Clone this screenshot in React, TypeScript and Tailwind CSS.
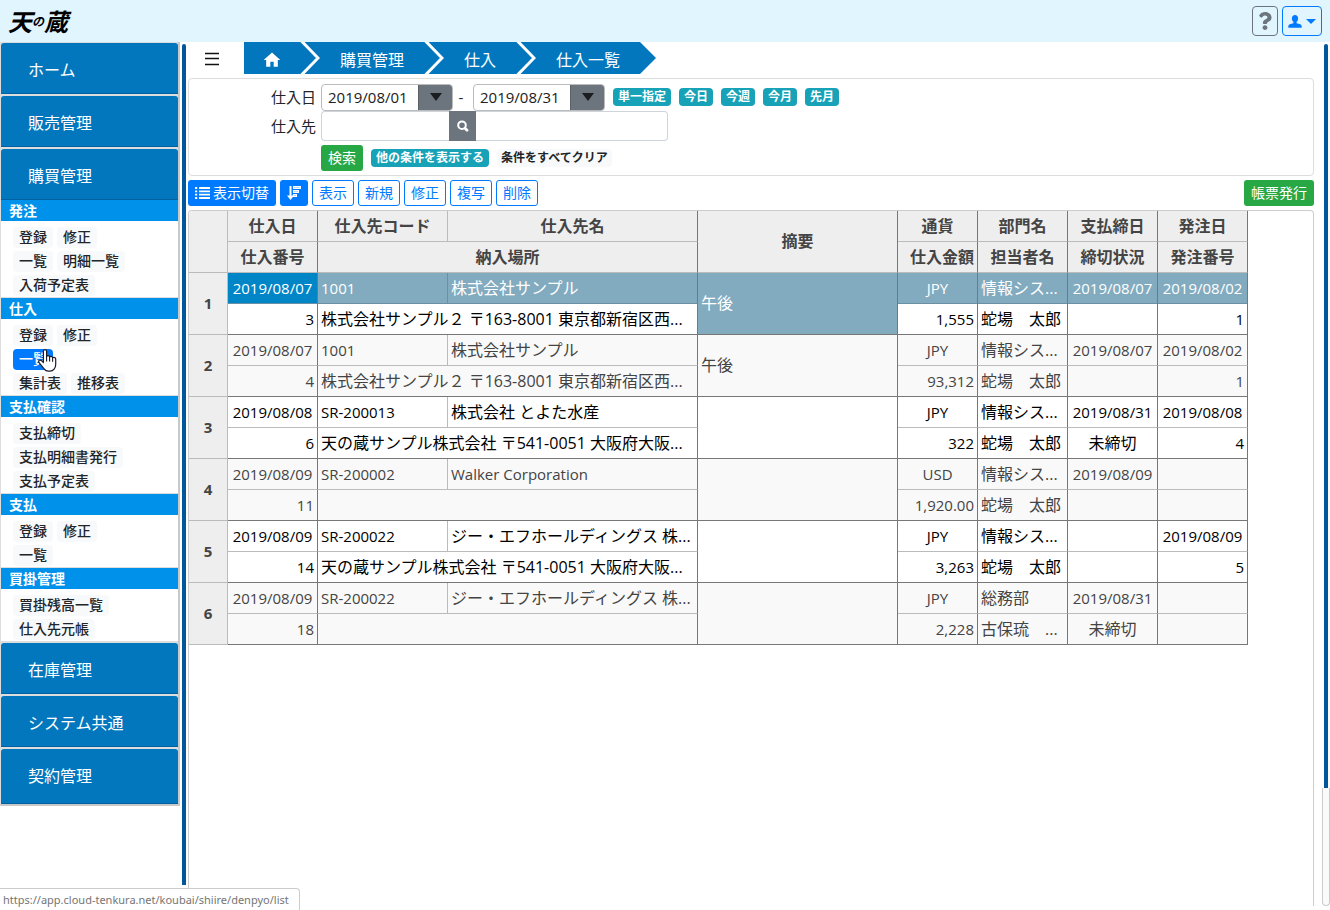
import { ReactNode, useState } from 'react';
import { FaQuestion } from 'react-icons/fa';
import { MdHome } from 'react-icons/md';
import clsx from 'clsx';

interface MenuSection {
  title: string;
  rows: string[][];
}

interface Denpyo {
  date: string;
  no: string;
  code: string;
  name: string;
  place: string;
  note: string;
  currency: string;
  amount: string;
  dept: string;
  staff: string;
  closeDate: string;
  closeState: string;
  orderDate: string;
  orderNo: string;
}

const sections: MenuSection[] = [
  { title: '発注', rows: [['登録', '修正'], ['一覧', '明細一覧'], ['入荷予定表']] },
  { title: '仕入', rows: [['登録', '修正'], ['一覧'], ['集計表', '推移表']] },
  { title: '支払確認', rows: [['支払締切'], ['支払明細書発行'], ['支払予定表']] },
  { title: '支払', rows: [['登録', '修正'], ['一覧']] },
  { title: '買掛管理', rows: [['買掛残高一覧'], ['仕入先元帳']] },
];

const records: Denpyo[] = [
  { date: '2019/08/07', no: '3', code: '1001', name: '株式会社サンプル', place: '株式会社サンプル２ 〒163-8001 東京都新宿区西...', note: '午後', currency: 'JPY', amount: '1,555', dept: '情報シス...', staff: '蛇場　太郎', closeDate: '2019/08/07', closeState: '', orderDate: '2019/08/02', orderNo: '1' },
  { date: '2019/08/07', no: '4', code: '1001', name: '株式会社サンプル', place: '株式会社サンプル２ 〒163-8001 東京都新宿区西...', note: '午後', currency: 'JPY', amount: '93,312', dept: '情報シス...', staff: '蛇場　太郎', closeDate: '2019/08/07', closeState: '', orderDate: '2019/08/02', orderNo: '1' },
  { date: '2019/08/08', no: '6', code: 'SR-200013', name: '株式会社 とよた水産', place: '天の蔵サンプル株式会社 〒541-0051 大阪府大阪...', note: '', currency: 'JPY', amount: '322', dept: '情報シス...', staff: '蛇場　太郎', closeDate: '2019/08/31', closeState: '未締切', orderDate: '2019/08/08', orderNo: '4' },
  { date: '2019/08/09', no: '11', code: 'SR-200002', name: 'Walker Corporation', place: '', note: '', currency: 'USD', amount: '1,920.00', dept: '情報シス...', staff: '蛇場　太郎', closeDate: '2019/08/09', closeState: '', orderDate: '', orderNo: '' },
  { date: '2019/08/09', no: '14', code: 'SR-200022', name: 'ジー・エフホールディングス 株...', place: '天の蔵サンプル株式会社 〒541-0051 大阪府大阪...', note: '', currency: 'JPY', amount: '3,263', dept: '情報シス...', staff: '蛇場　太郎', closeDate: '', closeState: '', orderDate: '2019/08/09', orderNo: '5' },
  { date: '2019/08/09', no: '18', code: 'SR-200022', name: 'ジー・エフホールディングス 株...', place: '', note: '', currency: 'JPY', amount: '2,228', dept: '総務部', staff: '古保琉　...', closeDate: '2019/08/31', closeState: '未締切', orderDate: '', orderNo: '' },
];

function MenuItem({ label, last = false }: { label: string; last?: boolean }) {
  return (
    <a
      href="#"
      className={clsx(
        'flex items-center rounded-t-[3px] border-b border-[#0062a3] bg-[#0277bd] px-[27px] text-base text-white',
        last ? 'h-[55px]' : 'h-[51px] pt-[3px]'
      )}
    >
      {label}
    </a>
  );
}

function HandCursor() {
  return (
    <svg className="absolute top-0 left-[25px] z-10 h-6 w-[19px]" viewBox="0 0 19 24" aria-hidden="true">
      <path
        d="M5.400 2.200c0-1.100.700-1.600 1.600-1.600s1.600.500 1.600 1.600v5.400c.300-.600.800-.900 1.400-.900.900 0 1.500.500 1.600 1.300.300-.400.800-.600 1.400-.600.900 0 1.500.500 1.600 1.300.300-.300.700-.400 1.200-.400 1.200 0 1.900.600 1.900 1.900v5.200c0 2.200-.700 3.600-1.600 4.800-1 1.300-2.400 2-4.200 2h-1.400c-2 0-3.400-.800-4.400-2.300L1.300 13.900c-.8-1-.8-1.900-.1-2.500.7-.6 1.600-.4 2.400.3l1.800 1.800z"
        fill="#fff"
        stroke="#1b1b2b"
        strokeWidth="1.2"
        strokeLinejoin="round"
      />
      <path d="M8.600 7.600v5M11.600 8v4.600M14.600 8.700v4" stroke="#1b1b2b" strokeWidth="1.1" fill="none" />
    </svg>
  );
}

function Sidebar() {
  return (
    <nav className="w-[180px] shrink-0">
      <div className="flex flex-col gap-[2px] border-r-2 border-b-2 border-l border-[#c8c8c8] border-l-[#ddd] bg-[#ddd] pt-px">
        <MenuItem label="ホーム" />
        <MenuItem label="販売管理" />
        <div>
          <MenuItem label="購買管理" />
          {sections.map((section) => (
            <div key={section.title} className="border-b border-[#ddd] bg-white last:border-b-0">
              <h2 className="h-[21px] bg-[#0091ea] px-2 text-sm leading-[21px] font-bold text-white">{section.title}</h2>
              <div className="flex flex-col gap-[3px] px-3 pt-[6px] pb-px">
                {section.rows.map((row) => (
                  <div key={row.join()} className="relative flex gap-1">
                    {row.map((label) => {
                      const active = section.title === '仕入' && label === '一覧';
                      return (
                        <a
                          key={label}
                          href="#"
                          className={clsx(
                            'h-[21px] rounded px-[6px] text-sm leading-5 font-medium',
                            active ? 'bg-[#007bff] text-white' : 'bg-[#f8f9fa] text-[#212529]'
                          )}
                        >
                          {label}
                        </a>
                      );
                    })}
                    {section.title === '仕入' && row[0] === '一覧' && <HandCursor />}
                  </div>
                ))}
              </div>
            </div>
          ))}
        </div>
        <MenuItem label="在庫管理" />
        <MenuItem label="システム共通" />
        <MenuItem label="契約管理" last />
      </div>
    </nav>
  );
}

function Separator() {
  return (
    <svg className="h-8 w-5" viewBox="0 0 20 32" aria-hidden="true">
      <path d="M.5 -2 18 16 .5 34" fill="none" stroke="#fff" strokeWidth="3" />
    </svg>
  );
}

function Breadcrumb() {
  return (
    <div className="flex h-8 items-center">
      <button className="flex h-8 w-14 items-center justify-start pt-[2px] pl-[17px]" aria-label="メニュー">
        <svg className="h-[14px] w-[14px]" viewBox="0 0 14 14" aria-hidden="true">
          <path d="M0 1.500h14M0 6.500h14M0 12.500h14" stroke="#111" strokeWidth="1.6" />
        </svg>
      </button>
      <div className="flex h-8 items-center bg-[#0277bd] text-base text-white">
        <a href="#" className="px-[18px] pt-1" aria-label="ホーム">
          <MdHome className="h-5 w-5" />
        </a>
        <Separator />
        <a href="#" className="px-5 pt-[3px]">購買管理</a>
        <Separator />
        <a href="#" className="px-5 pt-[3px]">仕入</a>
        <Separator />
        <a href="#" className="px-5 pt-[3px]">仕入一覧</a>
      </div>
      <svg className="h-8 w-4" viewBox="0 0 16 32" aria-hidden="true">
        <path d="M0 0 16 16 0 32z" fill="#0277bd" />
      </svg>
    </div>
  );
}

function Badge({ children }: { children: ReactNode }) {
  return <button className="h-[18px] rounded bg-[#17a2b8] px-[5px] text-xs leading-[18px] font-bold text-white">{children}</button>;
}

function DateBox({ value, label }: { value: string; label: string }) {
  return (
    <div className="flex h-[27px] w-[132px] overflow-hidden rounded border border-[#bbb]">
      <input aria-label={label} defaultValue={value} className="w-24 min-w-0 px-[6px] text-[15px] text-[#212121] outline-none" />
      <button className="flex flex-1 items-center justify-center border-l border-[#5a6268] bg-[#6c757d]" aria-label={`${label}を選択`}>
        <svg className="h-2 w-3" viewBox="0 0 12 8" aria-hidden="true">
          <path d="M0 0h12L6 8z" fill="#1b1e21" />
        </svg>
      </button>
    </div>
  );
}

function SearchPanel() {
  return (
    <form className="mt-1 flex h-[98px] flex-col rounded border border-[#ddd] pt-1 text-[15px] text-[#212529]" onSubmit={(e) => e.preventDefault()}>
      <div className="flex h-7 items-center">
        <span className="w-[127px] text-right">仕入日</span>
        <div className="ml-[5px] flex items-center">
          <DateBox value="2019/08/01" label="仕入日（開始）" />
          <span className="w-5 pr-1 text-center">-</span>
          <DateBox value="2019/08/31" label="仕入日（終了）" />
        </div>
        <div className="ml-2 flex gap-2">
          <Badge>単一指定</Badge>
          <Badge>今日</Badge>
          <Badge>今週</Badge>
          <Badge>今月</Badge>
          <Badge>先月</Badge>
        </div>
      </div>
      <div className="flex h-[30px] items-center">
        <label htmlFor="supplier" className="w-[127px] text-right">仕入先</label>
        <div className="ml-[5px] flex h-[30px]">
          <input id="supplier" className="w-32 rounded-l border border-r-0 border-[#ced4da] px-2 outline-none" />
          <button className="flex w-[27px] items-center justify-center bg-[#6c757d]" aria-label="仕入先を検索">
            <svg className="h-3 w-3" viewBox="0 0 12 12" aria-hidden="true">
              <circle cx="5" cy="5.200" r="3.800" fill="none" stroke="#fff" strokeWidth="2" />
              <path d="M8 8.200l2 2" stroke="#fff" strokeWidth="2.800" strokeLinecap="round" />
            </svg>
          </button>
          <input aria-label="仕入先名" className="w-48 rounded-r border border-l-0 border-[#ced4da] px-2 outline-none" />
        </div>
      </div>
      <div className="ml-[132px] flex h-[34px] items-center gap-2">
        <button className="h-[26px] rounded-[3px] bg-[#28a745] px-[7px] text-sm text-white">検索</button>
        <Badge>他の条件を表示する</Badge>
        <button className="h-[18px] rounded bg-[#f8f9fa] px-1 text-xs leading-[18px] font-bold text-[#212529]">条件をすべてクリア</button>
      </div>
    </form>
  );
}

function Toolbar() {
  return (
    <div className="mt-1 flex h-[26px] gap-1 text-sm">
      <button className="flex items-center gap-[3px] rounded-[3px] bg-[#007bff] px-[7px] text-white">
        <svg className="h-3 w-[15px]" viewBox="0 0 15 12" aria-hidden="true">
          <path d="M0 1h2.2M0 4.3h2.2M0 7.6h2.2M0 11h2.2M4 1h11M4 4.3h11M4 7.6h11M4 11h11" stroke="#fff" strokeWidth="1.8" />
        </svg>
        表示切替
      </button>
      <button className="flex w-7 items-center justify-center rounded-[3px] bg-[#007bff]" aria-label="並び替え">
        <svg className="h-[14px] w-[14px]" viewBox="0 0 14 14" aria-hidden="true">
          <path d="M2.500 0h2v9.500h2.500L3.500 14 0 9.500h2.500z" fill="#fff" />
          <path d="M6.500.6h6.900v1.800H6.500zM6.500 4.600h5v1.800h-5zM6.500 8.600h3v1.800h-3z" fill="#fff" fillOpacity=".45" stroke="#fff" strokeWidth="1.100" />
        </svg>
      </button>
      {['表示', '新規', '修正', '複写', '削除'].map((label) => (
        <button key={label} className="rounded-[3px] border border-[#007bff] bg-white px-[6px] text-[#007bff]">
          {label}
        </button>
      ))}
      <button className="ml-auto rounded-[3px] bg-[#28a745] px-[7px] text-white">帳票発行</button>
    </div>
  );
}

const headCell = 'h-[31px] border-r border-b border-r-[#777] border-b-[#bbb] bg-[#eee] p-0 font-bold text-[#444]';
const bodyCell = 'h-[31px] overflow-hidden border-r border-b border-r-[#777] px-[3px] py-0 whitespace-nowrap';

function RecordRows({ record, index, selected, onSelect }: { record: Denpyo; index: number; selected: boolean; onSelect: () => void }) {
  const base = index % 2 === 1 ? 'bg-[#f9f9f9] text-[#444]' : 'bg-white text-black';
  const top = clsx(bodyCell, selected ? 'border-b-[#6b8fa3] bg-[#82abc0] text-white' : `${base} border-b-[#bbb]`);
  const bottom = clsx(bodyCell, base, 'border-b-[#777]');

  return (
    <tbody onClick={onSelect}>
      <tr>
        <th rowSpan={2} scope="rowgroup" className="border-r border-b border-[#bbb] bg-[#eee] p-0 pb-[2px] text-[15px] font-bold text-[#444]">
          {index + 1}
        </th>
        <td className={clsx(bodyCell, 'text-center text-[15px]', selected ? 'border-b-[#6b8fa3] bg-[#0085c7] text-white' : `${base} border-b-[#bbb]`)}>{record.date}</td>
        <td className={clsx(top, 'text-[15px]', selected ? 'border-r-[#6b8fa3]!' : 'border-r-[#bbb]!')}>{record.code}</td>
        <td className={top}>
          <span className={record.name.startsWith('Walker') ? 'text-[15px]' : ''}>{record.name}</span>
        </td>
        <td rowSpan={2} className={clsx(bodyCell, 'border-b-[#777] pb-[2px]!', selected ? 'bg-[#82abc0] text-white' : base)}>
          {record.note}
        </td>
        <td className={clsx(top, 'text-center text-[15px]')}>{record.currency}</td>
        <td className={top}>{record.dept}</td>
        <td className={clsx(top, 'text-center text-[15px]')}>{record.closeDate}</td>
        <td className={clsx(top, 'text-center text-[15px]')}>{record.orderDate}</td>
      </tr>
      <tr>
        <td className={clsx(bottom, 'text-right text-[15px]')}>{record.no}</td>
        <td colSpan={2} className={bottom}>{record.place}</td>
        <td className={clsx(bottom, 'text-right text-[15px]')}>{record.amount}</td>
        <td className={bottom}>{record.staff}</td>
        <td className={clsx(bottom, 'text-center')}>{record.closeState}</td>
        <td className={clsx(bottom, 'text-right text-[15px]')}>{record.orderNo}</td>
      </tr>
    </tbody>
  );
}

function DenpyoTable() {
  const [selected, setSelected] = useState(0);

  return (
    <div className="mt-1 flex-1 rounded-t border border-b-0 border-[#ccc]">
      <table className="w-[1059px] table-fixed border-separate border-spacing-0 text-base leading-[30px]">
        <colgroup>
          <col className="w-[39px]" />
          <col className="w-[90px]" />
          <col className="w-[130px]" />
          <col className="w-[250px]" />
          <col className="w-[200px]" />
          <col className="w-[80px]" />
          <col className="w-[90px]" />
          <col className="w-[90px]" />
          <col className="w-[90px]" />
        </colgroup>
        <thead>
          <tr>
            <td rowSpan={2} className="rounded-tl border-r border-b border-[#bbb] bg-[#eee] p-0" />
            <th className={headCell}>仕入日</th>
            <th className={clsx(headCell, 'border-r-[#bbb]!')}>仕入先コード</th>
            <th className={headCell}>仕入先名</th>
            <th rowSpan={2} className={clsx(headCell, 'pb-[2px]!')}>摘要</th>
            <th className={headCell}>通貨</th>
            <th className={headCell}>部門名</th>
            <th className={headCell}>支払締日</th>
            <th className={headCell}>発注日</th>
          </tr>
          <tr>
            <th className={headCell}>仕入番号</th>
            <th colSpan={2} className={headCell}>納入場所</th>
            <th className={clsx(headCell, 'pr-[3px]! text-right')}>仕入金額</th>
            <th className={headCell}>担当者名</th>
            <th className={headCell}>締切状況</th>
            <th className={headCell}>発注番号</th>
          </tr>
        </thead>
        {records.map((record, index) => (
          <RecordRows
            key={record.no}
            record={record}
            index={index}
            selected={selected === index}
            onSelect={() => setSelected(index)}
          />
        ))}
      </table>
    </div>
  );
}

export default function App() {
  return (
    <div className="flex min-h-screen flex-col bg-white font-['Open_Sans','Noto_Sans_CJK_JP',sans-serif] text-[#212529]">
      {/* Header */}
      <header className="flex h-[42px] items-center justify-between bg-[#e1f5fe] pr-2 pl-2">
        <a href="#" className="flex items-center font-['Noto_Sans_CJK_JP',sans-serif] leading-none font-bold text-black italic">
          <span className="text-2xl">天</span>
          <span className="text-xs">の</span>
          <span className="text-2xl">蔵</span>
        </a>
        <div className="flex gap-1">
          <button className="flex h-[30px] w-[26px] items-center justify-center rounded border border-[#6c757d] text-[#6c757d]" aria-label="ヘルプ">
            <FaQuestion className="h-[18px] w-[18px]" />
          </button>
          <button className="flex h-[30px] w-10 items-center justify-center gap-1 rounded border border-[#007bff] text-[#007bff]" aria-label="ユーザー">
            <svg className="h-[14px] w-[14px]" viewBox="0 0 14 14" aria-hidden="true">
              <path d="M7 1c1.900 0 3.100 1.400 3.100 3.400 0 1.500-.6 2.700-1.500 3.400v1.400c2.700.4 5.100 1.200 5.100 3v1.600H.3v-1.600c0-1.800 2.400-2.600 5.100-3V7.800C4.500 7.100 3.900 5.900 3.900 4.400 3.900 2.400 5.100 1 7 1z" fill="currentColor" />
            </svg>
            <svg className="h-[5px] w-[10px]" viewBox="0 0 10 5" aria-hidden="true">
              <path d="M0 0h10L5 5z" fill="currentColor" />
            </svg>
          </button>
        </div>
      </header>

      <div className="flex flex-1">
        <Sidebar />
        {/* Side menu scroll bar */}
        <div className="flex w-2 shrink-0 flex-col items-center pt-[2px] pb-[25px]">
          <div className="w-1 flex-1 rounded-t-sm bg-[#01579b]" />
        </div>
        <main className="flex min-w-0 flex-1 flex-col pb-1">
          <Breadcrumb />
          <SearchPanel />
          <Toolbar />
          <DenpyoTable />
        </main>
        {/* Page scroll bar */}
        <div className="ml-2 flex w-2 shrink-0 flex-col items-center pt-[2px] pb-1">
          <div className="w-1 flex-1 rounded-t-sm bg-[#01579b]" />
          <div className="h-[118px] w-2 rounded-b border border-t-0 border-[#ccc] bg-[#fafafa]" />
        </div>
      </div>

      {/* Link status */}
      <div className="fixed bottom-0 left-0 h-[22px] w-[300px] rounded-tr border-t border-r border-[#ccc] bg-white px-[3px] font-['Noto_Sans',sans-serif] text-[11px] leading-[21px] whitespace-nowrap text-[#757575]">
        https://app.cloud-tenkura.net/koubai/shiire/denpyo/list
      </div>
    </div>
  );
}
